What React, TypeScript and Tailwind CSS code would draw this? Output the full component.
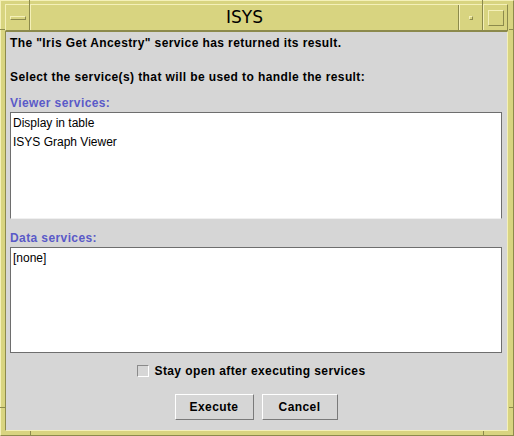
import React from "react";

export default function App() {
  const f = { fontFamily: '"Liberation Sans", Arial, sans-serif' };
  return (
    <div className="w-[514px] h-[436px] bg-[#d8d480] relative overflow-hidden" style={f}>
      {/* outer frame edges */}
      <div className="absolute inset-0 border-t border-l border-t-[#f4f0b8] border-l-[#f4f0b8] border-b border-r border-b-[#8c8a4c] border-r-[#8c8a4c] pointer-events-none" />
      {/* resize corner ticks */}
      <div className="absolute left-[29px] top-0 w-px h-[5px] bg-[#8c8a4c]" />
      <div className="absolute left-[482px] top-0 w-px h-[5px] bg-[#8c8a4c]" />
      <div className="absolute left-[30px] bottom-0 w-px h-[5px] bg-[#8c8a4c]" />
      <div className="absolute left-[483px] bottom-0 w-px h-[5px] bg-[#8c8a4c]" />
      <div className="absolute left-0 top-[29px] w-[5px] h-px bg-[#8c8a4c]" />
      <div className="absolute right-0 top-[29px] w-[5px] h-px bg-[#8c8a4c]" />
      <div className="absolute left-0 top-[407px] w-[5px] h-px bg-[#8c8a4c]" />
      <div className="absolute right-0 top-[407px] w-[5px] h-px bg-[#8c8a4c]" />

      <div className="flex flex-col pt-[4px] pl-[5px] pr-[6px] pb-[5px] h-full">
        {/* title bar */}
        <div className="flex h-[27px] border-t border-l border-[#f4f0b8] border-b-[#8c8a4c] border-r-[#8c8a4c] border-b border-r">
          <div className="w-[24px] flex items-center justify-center border-r border-r-[#8c8a4c]">
            <div className="w-[16px] h-[4px] border border-t-[#f4f0b8] border-l-[#f4f0b8] border-b-[#8c8a4c] border-r-[#8c8a4c]" />
          </div>
          <div className="flex-1 flex items-center justify-center border-l border-l-[#f4f0b8] border-r border-r-[#8c8a4c] text-[17px] text-black" style={{ fontFamily: '"DejaVu Sans", sans-serif' }}>
            ISYS
          </div>
          <div className="w-[24px] flex items-center justify-center border-l border-l-[#f4f0b8] border-r border-r-[#8c8a4c]">
            <div className="w-[4px] h-[4px] border border-t-[#f4f0b8] border-l-[#f4f0b8] border-b-[#8c8a4c] border-r-[#8c8a4c]" />
          </div>
          <div className="w-[24px] flex items-center justify-center border-l border-l-[#f4f0b8]">
            <div className="w-[16px] h-[16px] border border-t-[#f4f0b8] border-l-[#f4f0b8] border-b-[#8c8a4c] border-r-[#8c8a4c]" />
          </div>
        </div>

        {/* content */}
        <div className="flex-1 bg-[#d6d6d6] border-l border-t border-l-[#8c8a4c] border-t-[#8c8a4c] border-r border-b border-r-[#f4f0b8] border-b-[#f4f0b8] pl-[4px] pr-[5px] flex flex-col text-[12px] text-black">
          <div className="font-bold tracking-[0.4px] h-[20px] leading-[20px] mt-[1px]">The "Iris Get Ancestry" service has returned its result.</div>
          <div className="h-[14px]" />
          <div className="font-bold tracking-[0.4px] h-[20px] leading-[20px]">Select the service(s) that will be used to handle the result:</div>
          <div className="font-bold tracking-[0.4px] h-[17px] leading-[17px] mt-[8px] text-[#5a5ac8]">Viewer services:</div>
          <div className="h-[107px] bg-white border border-t-[#6e6e6e] border-l-[#6e6e6e] border-b-[#f0f0f0] border-r-[#6e6e6e] px-[2px] pt-[2px]">
            <div className="h-[19px] leading-[17px]">Display in table</div>
            <div className="h-[19px] leading-[17px]">ISYS Graph Viewer</div>
          </div>
          <div className="font-bold tracking-[0.4px] h-[17px] leading-[17px] mt-[11px] text-[#5a5ac8]">Data services:</div>
          <div className="h-[106px] bg-white border border-t-[#6e6e6e] border-l-[#6e6e6e] border-b-[#6e6e6e] border-r-[#6e6e6e] px-[2px] pt-[2px]">
            <div className="h-[19px] leading-[17px]">[none]</div>
          </div>
          <div className="flex items-center justify-center gap-[5px] mt-[11px] h-[14px] pr-[9px]">
            <div className="w-[12px] h-[12px] border border-t-[#8a8a8a] border-l-[#8a8a8a] border-b-white border-r-white bg-[#d6d6d6]" />
            <span className="font-bold tracking-[0.4px]">Stay open after executing services</span>
          </div>
          <div className="flex justify-center gap-[8px] mt-[16px]">
            <button className="w-[79px] h-[26px] font-bold tracking-[0.4px] border border-t-white border-l-white border-b-[#7a7a7a] border-r-[#7a7a7a] bg-[#d6d6d6]">Execute</button>
            <button className="w-[76px] h-[26px] font-bold tracking-[0.4px] border border-t-white border-l-white border-b-[#7a7a7a] border-r-[#7a7a7a] bg-[#d6d6d6]">Cancel</button>
          </div>
        </div>
      </div>
    </div>
  );
}
